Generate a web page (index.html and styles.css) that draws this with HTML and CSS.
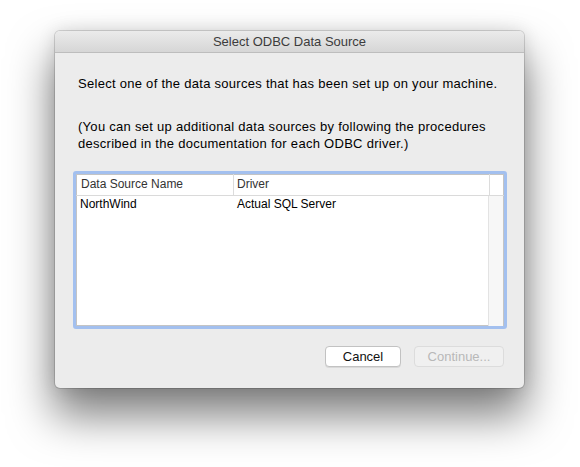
FILE: index.html
```html
<!DOCTYPE html>
<html>
<head>
<meta charset="utf-8">
<link rel="stylesheet" href="styles.css">
</head>
<body>
<div class="window">
  <div class="titlebar">Select ODBC Data Source</div>
  <div class="content">
    <p class="intro">Select one of the data sources that has been set up on your machine.</p>
    <p class="note">(You can set up additional data sources by following the procedures described in the documentation for each ODBC driver.)</p>
    <div class="table">
      <div class="row head">
        <div class="c1">Data Source Name</div>
        <div class="c2">Driver</div>
        <div class="c3"></div>
      </div>
      <div class="body">
        <div class="row item">
          <div class="c1">NorthWind</div>
          <div class="c2">Actual SQL Server</div>
        </div>
        <div class="gutter"></div>
      </div>
    </div>
    <div class="buttons">
      <button class="btn">Cancel</button>
      <button class="btn disabled">Continue...</button>
    </div>
  </div>
</div>
</body>
</html>
```
FILE: styles.css
```css
html, body { margin: 0; padding: 0; background: #ffffff; }
html { height: 100%; }
body {
  font-family: "Liberation Sans", Arial, sans-serif;
  font-size: 13px;
  color: #000;
  padding-top: 31px;
  padding-left: 55px;
  min-height: 467px;
  box-sizing: border-box;
}
.window {
  width: 469px;
  height: 357px;
  border-radius: 5px;
  background: #ececec;
  box-shadow: 0 0 0 1px rgba(0,0,0,0.14), 0 26px 44px 2px rgba(0,0,0,0.5), 0 0 18px rgba(0,0,0,0.12);
  display: flex;
  flex-direction: column;
  overflow: hidden;
}
.titlebar {
  height: 22px;
  line-height: 22px;
  text-align: center;
  color: #3c3c3c;
  background: linear-gradient(#ebebeb, #d6d6d6);
  border-bottom: 1px solid #bdbdbd;
  box-sizing: border-box;
  flex: none;
}
.content {
  flex: 1;
  display: flex;
  flex-direction: column;
  padding: 22px 20px 21px 23px;
}
p { margin: 0; line-height: 17px; letter-spacing: 0.28px; }
.intro { margin-bottom: 26px; }
.note { margin-bottom: 19px; }
.table {
  margin-left: -5px;
  width: 428px;
  height: 152px;
  flex: none;
  background: #fff;
  border: 3px solid #a3c0ef;
  border-radius: 3px;
  box-shadow: inset 0 0 0 1px #c4c4c4;
  display: flex;
  flex-direction: column;
  overflow: hidden;
  font-size: 12px;
}
.row { display: flex; }
.head {
  height: 21px;
  line-height: 21px;
  border-bottom: 1px solid #dadada;
  color: #333;
  flex: none;
}
.head .c1 { width: 152px; padding-left: 5px; border-right: 1px solid #dcdcdc; }
.head .c2 { width: 252px; padding-left: 3px; border-right: 1px solid #dcdcdc; }
.head .c3 { flex: 1; }
.body { flex: 1; display: flex; }
.item { flex: 1; height: 17px; line-height: 17px; }
.item .c1 { width: 157px; padding-left: 4px; }
.item .c2 { width: 250px; }
.gutter {
  width: 14px;
  background: #f7f7f7;
  border-left: 1px solid #e3e3e3;
  border-right: 1px solid #c4c4c4;
}
.buttons {
  margin-top: auto;
  display: flex;
  justify-content: flex-end;
  gap: 13px;
}
.btn {
  font-family: "Liberation Sans", Arial, sans-serif;
  font-size: 13px;
  height: 21px;
  padding: 0;
  border-radius: 4px;
  background: #fff;
  border: 1px solid #c2c2c2;
  box-shadow: 0 1px 0 rgba(0,0,0,0.08);
  color: #111;
  width: 76px;
}
.btn.disabled {
  width: 90px;
  background: #f0f0f0;
  border-color: #dcdcdc;
  color: #b8b8b8;
  box-shadow: none;
}
```
